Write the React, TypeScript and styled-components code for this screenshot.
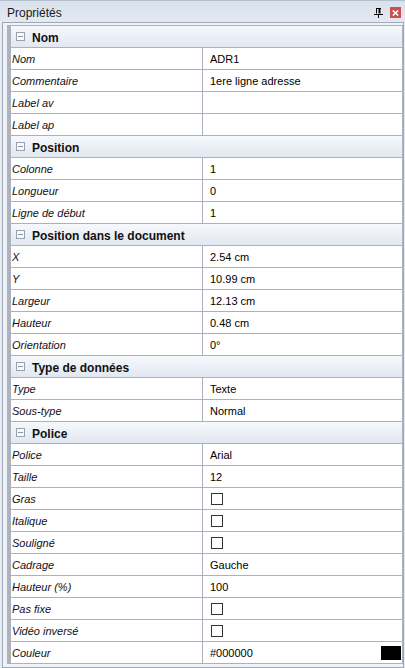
import React from 'react';
import styled, { createGlobalStyle } from 'styled-components';

const GlobalStyle = createGlobalStyle`
	html, body {
		margin: 0;
		padding: 0;
		background: #e8edf4;
	}
	#root {
		height: 100vh;
	}
`;

type Row = { label: string; value?: string; kind?: 'text' | 'check' | 'color' };
type Section = { title: string; rows: Row[] };

const sections: Section[] = [
	{
		title: 'Nom',
		rows: [
			{ label: 'Nom', value: 'ADR1' },
			{ label: 'Commentaire', value: '1ere ligne adresse' },
			{ label: 'Label av', value: '' },
			{ label: 'Label ap', value: '' }
		]
	},
	{
		title: 'Position',
		rows: [
			{ label: 'Colonne', value: '1' },
			{ label: 'Longueur', value: '0' },
			{ label: 'Ligne de début', value: '1' }
		]
	},
	{
		title: 'Position dans le document',
		rows: [
			{ label: 'X', value: '2.54 cm' },
			{ label: 'Y', value: '10.99 cm' },
			{ label: 'Largeur', value: '12.13 cm' },
			{ label: 'Hauteur', value: '0.48 cm' },
			{ label: 'Orientation', value: '0°' }
		]
	},
	{
		title: 'Type de données',
		rows: [
			{ label: 'Type', value: 'Texte' },
			{ label: 'Sous-type', value: 'Normal' }
		]
	},
	{
		title: 'Police',
		rows: [
			{ label: 'Police', value: 'Arial' },
			{ label: 'Taille', value: '12' },
			{ label: 'Gras', kind: 'check' },
			{ label: 'Italique', kind: 'check' },
			{ label: 'Souligné', kind: 'check' },
			{ label: 'Cadrage', value: 'Gauche' },
			{ label: 'Hauteur (%)', value: '100' },
			{ label: 'Pas fixe', kind: 'check' },
			{ label: 'Vidéo inversé', kind: 'check' },
			{ label: 'Couleur', value: '#000000', kind: 'color' }
		]
	}
];

const Window = styled.div`
	height: 100%;
	display: flex;
	flex-direction: column;
	font-family: "Liberation Sans", Arial, sans-serif;
	background: #e8edf4;
`;

const TitleBar = styled.div`
	flex: none;
	height: 21px;
	border-top: 1px solid #b4bfcd;
	display: flex;
	align-items: center;
	padding: 0 4px 0 7px;
	background: linear-gradient(#d9e1ec, #e4e9f1);
`;

const Title = styled.div`
	flex: 1;
	font-size: 12px;
	color: #1b1b1b;
	padding-top: 3px;
`;

const PinButton = styled.div`
	width: 9px;
	height: 10px;
	margin: 2px 7px 0 0;
	display: flex;
`;

const CloseButton = styled.div`
	width: 11px;
	height: 11px;
	margin-top: 2px;
	background: #c9504c;
	display: flex;
	align-items: center;
	justify-content: center;
`;

const Frame = styled.div`
	flex: 1;
	margin: 0 1px 0 2px;
	border: 1px solid #9ea8b6;
	background: #eff2f6;
	padding: 2px 0 0 4px;
	overflow: hidden;
`;

const Grid = styled.div`
	border-top: 1px solid #a9b2bf;
	border-left: 4px solid #acb3be;
	border-right: 1px solid #a9b2bf;
	background: #ffffff;
`;

const Header = styled.div`
	height: 22px;
	box-sizing: border-box;
	border-bottom: 1px solid #a9b2bf;
	background: linear-gradient(#f6f8fb, #e2e8f1);
	display: flex;
	align-items: center;
	padding-left: 5px;
	gap: 7px;
`;

const Toggle = styled.div`
	width: 9px;
	height: 9px;
	box-sizing: border-box;
	border: 1px solid #98a2b0;
	background: #f7f9fb;
	display: flex;
	align-items: center;
	justify-content: center;
	&::after {
		content: '';
		width: 5px;
		height: 1px;
		background: #8a94a3;
	}
`;

const HeaderTitle = styled.div`
	font-size: 12px;
	font-weight: bold;
	color: #111111;
	padding-top: 2px;
`;

const PropRow = styled.div`
	display: grid;
	grid-template-columns: 192px 1fr;
	height: 22px;
	box-sizing: border-box;
	border-bottom: 1px solid #a9b2bf;
`;

const Label = styled.div`
	border-right: 1px solid #a9b2bf;
	font-size: 11px;
	font-style: italic;
	color: #10101a;
	padding: 1px 0 0 1px;
	display: flex;
	align-items: center;
`;

const Value = styled.div`
	font-size: 11px;
	color: #000000;
	padding: 1px 1px 0 7px;
	display: flex;
	align-items: center;
	justify-content: space-between;
`;

const CheckBox = styled.div`
	width: 12px;
	height: 12px;
	box-sizing: border-box;
	border: 1px solid #333333;
	background: #ffffff;
	margin-left: 1px;
`;

const Swatch = styled.div<{ $color: string }>`
	width: 20px;
	height: 14px;
	background: ${(p) => p.$color};
`;

const PinIcon = () => (
	<svg width="9" height="10" viewBox="0 0 9 10">
		<path d="M2 0.5H7" stroke="#000" strokeWidth="1" />
		<path d="M2.5 1V5.5" stroke="#000" strokeWidth="1" />
		<path d="M5.5 1V5.5" stroke="#000" strokeWidth="2" />
		<path d="M0 6.5H9" stroke="#000" strokeWidth="1" />
		<path d="M4.5 7V10" stroke="#000" strokeWidth="1" />
	</svg>
);

const CloseIcon = () => (
	<svg width="7" height="6" viewBox="0 0 7 6">
		<path d="M0.8 0.5L6.2 5.5M6.2 0.5L0.8 5.5" stroke="#fff" strokeWidth="1.6" />
	</svg>
);

const PropertyValue = ({ row }: { row: Row }) => {
	if (row.kind === 'check') {
		return <Value><CheckBox /></Value>;
	}
	if (row.kind === 'color') {
		return (
			<Value>
				<span>{row.value}</span>
				<Swatch $color={row.value || '#000'} />
			</Value>
		);
	}
	return <Value>{row.value}</Value>;
};

const App = () => {
	return (
		<>
			<GlobalStyle />
			<Window>
				<TitleBar>
					<Title>Propriétés</Title>
					<PinButton><PinIcon /></PinButton>
					<CloseButton><CloseIcon /></CloseButton>
				</TitleBar>
				<Frame>
					<Grid>
						{sections.map((section) => (
							<React.Fragment key={section.title}>
								<Header>
									<Toggle />
									<HeaderTitle>{section.title}</HeaderTitle>
								</Header>
								{section.rows.map((row) => (
									<PropRow key={section.title + row.label}>
										<Label>{row.label}</Label>
										<PropertyValue row={row} />
									</PropRow>
								))}
							</React.Fragment>
						))}
					</Grid>
				</Frame>
			</Window>
		</>
	);
};

export default App;
